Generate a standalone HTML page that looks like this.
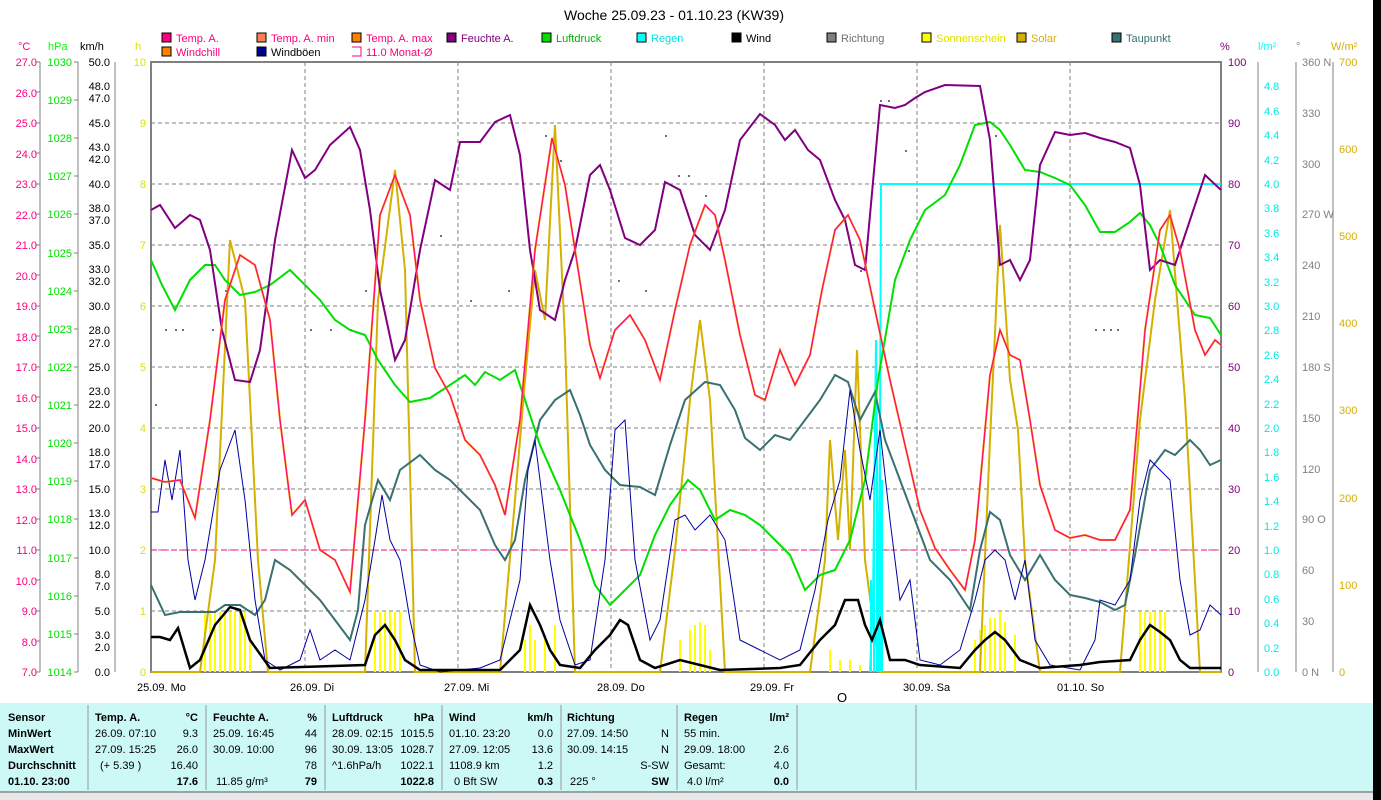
<!DOCTYPE html>
<html><head><meta charset="utf-8"><style>
html,body{margin:0;padding:0;background:#fff;width:1381px;height:800px;overflow:hidden;font-family:"Liberation Sans",sans-serif}
svg{position:absolute;left:0;top:0}
text{font-family:"Liberation Sans",sans-serif;font-size:11px}
</style></head><body>
<svg width="1381" height="800" viewBox="0 0 1381 800" xmlns="http://www.w3.org/2000/svg">
<rect x="1373" y="0" width="8" height="800" fill="#000"/>
<text x="674" y="20" text-anchor="middle" style="font-size:14px">Woche 25.09.23 - 01.10.23 (KW39)</text>
<g>
<rect x="162" y="33" width="9" height="9" fill="#ff0080" stroke="#000"/><text x="176" y="42" fill="#ff0080">Temp. A.</text>
<rect x="257" y="33" width="9" height="9" fill="#ff8050" stroke="#000"/><text x="271" y="42" fill="#ff0080">Temp. A. min</text>
<rect x="352" y="33" width="9" height="9" fill="#ff8000" stroke="#000"/><text x="366" y="42" fill="#ff0080">Temp. A. max</text>
<rect x="447" y="33" width="9" height="9" fill="#800080" stroke="#000"/><text x="461" y="42" fill="#800080">Feuchte A.</text>
<rect x="542" y="33" width="9" height="9" fill="#00e000" stroke="#000"/><text x="556" y="42" fill="#00b000">Luftdruck</text>
<rect x="637" y="33" width="9" height="9" fill="#00ffff" stroke="#000"/><text x="651" y="42" fill="#00e0e0">Regen</text>
<rect x="732" y="33" width="9" height="9" fill="#000" stroke="#000"/><text x="746" y="42">Wind</text>
<rect x="827" y="33" width="9" height="9" fill="#808080" stroke="#000"/><text x="841" y="42" fill="#707070">Richtung</text>
<rect x="922" y="33" width="9" height="9" fill="#ffff00" stroke="#000"/><text x="936" y="42" fill="#e0e000">Sonnenschein</text>
<rect x="1017" y="33" width="9" height="9" fill="#d4b000" stroke="#000"/><text x="1031" y="42" fill="#d4b000">Solar</text>
<rect x="1112" y="33" width="9" height="9" fill="#3a7070" stroke="#000"/><text x="1126" y="42" fill="#3a7070">Taupunkt</text>
<rect x="162" y="47" width="9" height="9" fill="#ff8000" stroke="#000"/><text x="176" y="56" fill="#ff0080">Windchill</text>
<rect x="257" y="47" width="9" height="9" fill="#000090" stroke="#000"/><text x="271" y="56">Windböen</text>
<path d="M352 47h9v9h-9" fill="none" stroke="#ff0080"/><text x="366" y="56" fill="#ff0080">11.0 Monat-Ø</text>
</g>
<text x="18" y="50" fill="#ff0080">°C</text><text x="48" y="50" fill="#00ff00">hPa</text><text x="80" y="50">km/h</text><text x="135" y="50" fill="#e0e000">h</text>
<text x="1220" y="50" fill="#800080">%</text><text x="1258" y="50" fill="#00ffff">l/m²</text><text x="1296" y="50" fill="#808080">°</text><text x="1331" y="50" fill="#d4b000">W/m²</text>
<g stroke="#808080" fill="none">
<path d="M40 62V672M78 62V672M115 62V672M1258 62V672M1296 62V672M1333 62V672"/>
</g>
<g fill="#ff0080" text-anchor="end">
<text x="37" y="66">27.0</text><text x="37" y="97">26.0</text><text x="37" y="127">25.0</text><text x="37" y="158">24.0</text><text x="37" y="188">23.0</text><text x="37" y="219">22.0</text><text x="37" y="249">21.0</text><text x="37" y="280">20.0</text><text x="37" y="310">19.0</text><text x="37" y="341">18.0</text><text x="37" y="371">17.0</text><text x="37" y="402">16.0</text><text x="37" y="432">15.0</text><text x="37" y="463">14.0</text><text x="37" y="493">13.0</text><text x="37" y="524">12.0</text><text x="37" y="554">11.0</text><text x="37" y="585">10.0</text><text x="37" y="615">9.0</text><text x="37" y="646">8.0</text><text x="37" y="676">7.0</text>
</g>
<g stroke="#808080"><path d="M35 62h5M35 92h5M35 123h5M35 153h5M35 184h5M35 214h5M35 245h5M35 275h5M35 306h5M35 336h5M35 367h5M35 397h5M35 428h5M35 458h5M35 489h5M35 519h5M35 550h5M35 580h5M35 611h5M35 641h5M35 672h5"/>
<path d="M74 62h4M74 100h4M74 138h4M74 176h4M74 214h4M74 253h4M74 291h4M74 329h4M74 367h4M74 405h4M74 443h4M74 481h4M74 519h4M74 558h4M74 596h4M74 634h4M74 672h4"/></g>
<g fill="#00e000" text-anchor="end">
<text x="72" y="66">1030</text><text x="72" y="104">1029</text><text x="72" y="142">1028</text><text x="72" y="180">1027</text><text x="72" y="218">1026</text><text x="72" y="257">1025</text><text x="72" y="295">1024</text><text x="72" y="333">1023</text><text x="72" y="371">1022</text><text x="72" y="409">1021</text><text x="72" y="447">1020</text><text x="72" y="485">1019</text><text x="72" y="523">1018</text><text x="72" y="562">1017</text><text x="72" y="600">1016</text><text x="72" y="638">1015</text><text x="72" y="676">1014</text>
</g>
<g text-anchor="end">
<text x="110" y="66">50.0</text><text x="110" y="90">48.0</text><text x="110" y="102">47.0</text><text x="110" y="127">45.0</text><text x="110" y="151">43.0</text><text x="110" y="163">42.0</text><text x="110" y="188">40.0</text><text x="110" y="212">38.0</text><text x="110" y="224">37.0</text><text x="110" y="249">35.0</text><text x="110" y="273">33.0</text><text x="110" y="285">32.0</text><text x="110" y="310">30.0</text><text x="110" y="334">28.0</text><text x="110" y="347">27.0</text><text x="110" y="371">25.0</text><text x="110" y="395">23.0</text><text x="110" y="408">22.0</text><text x="110" y="432">20.0</text><text x="110" y="456">18.0</text><text x="110" y="468">17.0</text><text x="110" y="493">15.0</text><text x="110" y="517">13.0</text><text x="110" y="529">12.0</text><text x="110" y="554">10.0</text><text x="110" y="578">8.0</text><text x="110" y="590">7.0</text><text x="110" y="615">5.0</text><text x="110" y="639">3.0</text><text x="110" y="651">2.0</text><text x="110" y="676">0.0</text>
</g>
<g fill="#e0e000" text-anchor="end">
<text x="146" y="66">10</text><text x="146" y="127">9</text><text x="146" y="188">8</text><text x="146" y="249">7</text><text x="146" y="310">6</text><text x="146" y="371">5</text><text x="146" y="432">4</text><text x="146" y="493">3</text><text x="146" y="554">2</text><text x="146" y="615">1</text><text x="146" y="676">0</text>
</g>
<g fill="#800080">
<text x="1228" y="66">100</text><text x="1228" y="127">90</text><text x="1228" y="188">80</text><text x="1228" y="249">70</text><text x="1228" y="310">60</text><text x="1228" y="371">50</text><text x="1228" y="432">40</text><text x="1228" y="493">30</text><text x="1228" y="554">20</text><text x="1228" y="615">10</text><text x="1228" y="676">0</text>
</g>
<g fill="#00e8e8">
<text x="1264" y="90">4.8</text><text x="1264" y="115">4.6</text><text x="1264" y="139">4.4</text><text x="1264" y="164">4.2</text><text x="1264" y="188">4.0</text><text x="1264" y="212">3.8</text><text x="1264" y="237">3.6</text><text x="1264" y="261">3.4</text><text x="1264" y="286">3.2</text><text x="1264" y="310">3.0</text><text x="1264" y="334">2.8</text><text x="1264" y="359">2.6</text><text x="1264" y="383">2.4</text><text x="1264" y="408">2.2</text><text x="1264" y="432">2.0</text><text x="1264" y="456">1.8</text><text x="1264" y="481">1.6</text><text x="1264" y="505">1.4</text><text x="1264" y="530">1.2</text><text x="1264" y="554">1.0</text><text x="1264" y="578">0.8</text><text x="1264" y="603">0.6</text><text x="1264" y="627">0.4</text><text x="1264" y="652">0.2</text><text x="1264" y="676">0.0</text>
</g>
<g fill="#808080">
<text x="1302" y="66">360 N</text><text x="1302" y="117">330</text><text x="1302" y="168">300</text><text x="1302" y="218">270 W</text><text x="1302" y="269">240</text><text x="1302" y="320">210</text><text x="1302" y="371">180 S</text><text x="1302" y="422">150</text><text x="1302" y="473">120</text><text x="1302" y="523">90 O</text><text x="1302" y="574">60</text><text x="1302" y="625">30</text><text x="1302" y="676">0 N</text>
</g>
<g fill="#d4b000">
<text x="1339" y="66">700</text><text x="1339" y="153">600</text><text x="1339" y="240">500</text><text x="1339" y="327">400</text><text x="1339" y="414">300</text><text x="1339" y="502">200</text><text x="1339" y="589">100</text><text x="1339" y="676">0</text>
</g>
<g stroke="#808080" stroke-dasharray="4,3" fill="none">
<path d="M151 123H1221M151 184H1221M151 245H1221M151 306H1221M151 367H1221M151 428H1221M151 489H1221M151 550H1221M151 611H1221"/>
<path d="M305 62V672M458 62V672M611 62V672M764 62V672M917 62V672M1070 62V672"/>
</g>
<path d="M151 62H1221V672H151Z" fill="none" stroke="#808080" stroke-width="2"/>
<path d="M151 550H1221" stroke="#ff0080" stroke-dasharray="6,4"/>
<!-- direction dots -->
<g fill="#707070">
<rect x="165" y="329" width="2" height="2"/><rect x="175" y="329" width="2" height="2"/><rect x="182" y="329" width="2" height="2"/><rect x="155" y="404" width="2" height="2"/><rect x="212" y="329" width="2" height="2"/><rect x="225" y="290" width="2" height="2"/><rect x="310" y="329" width="2" height="2"/><rect x="330" y="329" width="2" height="2"/><rect x="350" y="329" width="2" height="2"/><rect x="365" y="290" width="2" height="2"/><rect x="440" y="235" width="2" height="2"/><rect x="470" y="300" width="2" height="2"/><rect x="508" y="290" width="2" height="2"/><rect x="545" y="135" width="2" height="2"/><rect x="560" y="160" width="2" height="2"/><rect x="570" y="260" width="2" height="2"/><rect x="618" y="280" width="2" height="2"/><rect x="645" y="290" width="2" height="2"/><rect x="665" y="135" width="2" height="2"/><rect x="678" y="175" width="2" height="2"/><rect x="688" y="175" width="2" height="2"/><rect x="705" y="195" width="2" height="2"/><rect x="860" y="270" width="2" height="2"/><rect x="880" y="100" width="2" height="2"/><rect x="888" y="100" width="2" height="2"/><rect x="905" y="150" width="2" height="2"/><rect x="908" y="250" width="2" height="2"/><rect x="995" y="135" width="2" height="2"/><rect x="1095" y="329" width="2" height="2"/><rect x="1103" y="329" width="2" height="2"/><rect x="1110" y="329" width="2" height="2"/><rect x="1117" y="329" width="2" height="2"/><rect x="1205" y="175" width="2" height="2"/>
</g>
<g stroke="#ffff00" stroke-width="2">
<path d="M205 672V612M210 672V612M215 672V612M220 672V612M225 672V612M230 672V612M235 672V612M240 672V612M245 672V612M250 672V640"/>
<path d="M375 672V612M380 672V612M385 672V612M390 672V612M395 672V612M400 672V612"/>
<path d="M525 672V640M530 672V625M535 672V640M545 672V640M555 672V625"/>
<path d="M680 672V640M690 672V630M695 672V625M700 672V622M705 672V625M710 672V650"/>
<path d="M830 672V650M840 672V660M850 672V660M860 672V665"/>
<path d="M975 672V640M980 672V630M985 672V625M990 672V618M995 672V618M1000 672V612M1005 672V622M1015 672V635"/>
<path d="M1140 672V612M1145 672V612M1150 672V612M1155 672V612M1160 672V612M1165 672V612"/>
</g>
<polyline fill="none" stroke="#d4b000" stroke-width="2" points="151,672 200,672 215,560 230,240 245,300 258,560 268,672 365,672 378,300 395,170 405,270 415,672 500,672 515,500 525,380 535,270 545,320 555,125 565,340 575,672 660,672 675,550 690,400 700,320 710,400 725,672 810,672 825,560 830,440 838,540 845,450 850,550 857,350 865,560 880,672 980,672 990,440 1000,225 1010,380 1018,430 1025,560 1040,672 1120,672 1140,420 1155,300 1170,210 1185,400 1200,672 1221,672"/>
<g stroke="#00ffff" stroke-width="2" fill="none">
<polyline points="870,672 873,600 876,340 879,672 881,184 1221,184"/>
<path d="M871 672V580M874 672V500M877 672V440M880 672V420M882 672V480"/>
</g>
<polyline fill="none" stroke="#3a7070" stroke-width="2" points="151,585 165,615 180,612 215,612 225,605 240,605 255,615 265,600 275,560 290,570 305,585 320,600 335,620 350,640 358,610 365,525 378,480 390,500 400,470 420,455 435,470 450,480 465,495 480,510 495,545 505,560 515,540 525,480 540,420 555,400 570,390 580,415 590,445 605,470 620,485 640,487 655,495 670,445 685,400 705,382 720,385 735,410 745,438 760,450 775,435 790,440 805,420 820,400 835,375 848,382 860,420 875,392 885,440 900,480 915,520 930,560 950,580 970,610 980,550 990,512 1000,520 1010,555 1025,580 1040,555 1055,580 1070,595 1085,598 1100,602 1115,610 1125,605 1135,555 1150,470 1165,450 1175,455 1190,440 1200,450 1210,465 1221,460"/>
<polyline fill="none" stroke="#00e000" stroke-width="2" points="151,260 162,285 175,310 190,280 205,265 215,265 225,280 240,295 255,292 270,285 290,270 305,285 320,300 335,320 350,330 365,335 378,360 395,385 410,402 430,398 450,385 465,375 475,385 485,372 500,380 515,370 525,400 540,445 560,490 580,540 595,585 610,605 625,590 640,575 655,535 670,505 688,480 700,490 715,520 730,510 745,515 760,525 775,540 790,555 805,590 820,575 835,570 850,540 865,480 878,380 895,280 910,240 925,210 945,195 960,165 975,125 990,122 1000,130 1010,145 1025,170 1040,172 1055,178 1070,185 1085,205 1100,232 1115,232 1130,222 1140,213 1150,225 1160,245 1175,285 1195,315 1210,318 1221,335"/>
<polyline fill="none" stroke="#0000a0" stroke-width="1" points="151,512 158,512 165,460 172,500 180,450 188,560 195,600 205,560 220,470 235,430 245,500 255,600 265,660 280,670 300,660 310,630 320,660 335,650 350,660 365,600 375,540 382,495 390,540 400,560 410,620 420,665 440,672 480,668 500,660 520,580 528,470 535,440 540,480 550,560 560,620 575,665 590,660 605,560 615,430 625,420 635,560 650,640 660,620 675,520 685,515 695,530 710,515 725,540 740,640 760,650 780,660 800,650 815,590 828,520 840,480 850,390 860,450 870,500 880,430 890,520 900,600 910,580 920,660 940,665 960,650 975,600 985,560 995,550 1005,560 1015,600 1025,560 1035,640 1050,665 1080,670 1095,640 1100,600 1115,605 1130,580 1140,500 1150,460 1160,470 1170,480 1180,580 1190,635 1200,630 1210,605 1221,615"/>
<polyline fill="none" stroke="#000" stroke-width="2.5" points="151,637 160,637 170,640 178,628 190,668 200,660 215,625 230,607 240,610 250,640 270,668 365,665 375,635 385,625 395,640 405,660 420,670 500,670 520,650 530,605 540,625 550,650 560,665 580,668 595,650 610,635 620,620 628,625 640,660 655,668 680,660 700,665 720,670 780,668 800,665 820,640 835,625 845,600 858,600 865,625 872,640 880,620 890,660 905,660 920,665 960,668 975,650 985,640 995,632 1005,640 1020,660 1040,668 1080,665 1100,662 1130,660 1140,640 1150,625 1160,632 1170,640 1180,660 1190,668 1221,668"/>
<polyline fill="none" stroke="#800080" stroke-width="2" points="151,210 160,205 175,228 190,215 200,220 210,250 222,330 235,380 250,382 260,350 275,240 292,150 305,178 315,170 330,145 350,127 360,150 370,210 380,290 395,360 405,340 420,250 435,180 450,190 460,142 480,142 495,122 510,115 520,155 530,250 540,310 555,320 565,280 575,250 590,175 600,165 610,190 625,238 640,245 655,230 665,182 680,190 695,235 710,250 725,210 740,140 760,114 775,125 785,140 795,130 808,150 820,160 835,200 845,220 855,265 865,270 880,105 895,108 905,105 915,98 925,92 945,85 980,86 990,140 1000,265 1010,260 1020,280 1030,260 1040,165 1055,132 1070,135 1085,133 1100,138 1115,142 1130,148 1140,185 1150,270 1160,260 1175,265 1190,220 1205,175 1221,190"/>
<polyline fill="none" stroke="#ff8000" stroke-width="2" points="151,478 165,482 180,480 195,518 210,420 225,300 240,255 255,265 270,320 280,420 292,515 305,500 320,550 335,560 350,592 365,420 380,215 395,175 410,215 420,300 435,368 450,395 465,440 480,455 495,485 505,515 520,420 535,250 552,138 565,185 575,250 590,345 600,378 615,330 630,315 645,340 660,380 675,310 690,245 705,205 715,215 725,260 740,335 755,395 765,400 780,350 795,385 810,355 822,290 835,230 848,215 860,240 875,310 890,380 905,445 920,510 935,548 950,570 965,590 975,540 990,375 1000,330 1010,355 1020,360 1030,420 1040,485 1055,530 1070,538 1085,535 1100,540 1115,540 1130,510 1145,330 1160,230 1170,215 1180,250 1195,330 1205,355 1215,340 1221,345"/>
<polyline fill="none" stroke="#ff0080" stroke-width="1" points="151,478 165,482 180,480 195,518 210,420 225,300 240,255 255,265 270,320 280,420 292,515 305,500 320,550 335,560 350,592 365,420 380,215 395,175 410,215 420,300 435,368 450,395 465,440 480,455 495,485 505,515 520,420 535,250 552,138 565,185 575,250 590,345 600,378 615,330 630,315 645,340 660,380 675,310 690,245 705,205 715,215 725,260 740,335 755,395 765,400 780,350 795,385 810,355 822,290 835,230 848,215 860,240 875,310 890,380 905,445 920,510 935,548 950,570 965,590 975,540 990,375 1000,330 1010,355 1020,360 1030,420 1040,485 1055,530 1070,538 1085,535 1100,540 1115,540 1130,510 1145,330 1160,230 1170,215 1180,250 1195,330 1205,355 1215,340 1221,345"/>
<g style="font-size:11px">
<text x="137" y="691">25.09.  Mo</text><text x="290" y="691">26.09.  Di</text><text x="444" y="691">27.09.  Mi</text><text x="597" y="691">28.09.  Do</text><text x="750" y="691">29.09.  Fr</text><text x="903" y="691">30.09.  Sa</text><text x="1057" y="691">01.10.  So</text>
<text x="837" y="702" style="font-size:13px">O</text>
</g>
<rect x="0" y="703" width="1373" height="89" fill="#ccf8f6"/>
<path d="M0 792H1373" stroke="#a0a0a0" stroke-width="2"/>
<rect x="0" y="793" width="1373" height="7" fill="#e8e8e8"/>
<g stroke="#999"><path d="M88 705V790M206 705V790M325 705V790M442 705V790M561 705V790M677 705V790M797 705V790M916 705V790"/></g>
<g style="font-size:11px">
<g font-weight="bold"><text x="8" y="721">Sensor</text><text x="8" y="737">MinWert</text><text x="8" y="753">MaxWert</text><text x="8" y="769">Durchschnitt</text><text x="8" y="785">01.10. 23:00</text></g>
<text x="95" y="721" font-weight="bold">Temp. A.</text><text x="198" y="721" font-weight="bold" text-anchor="end">°C</text>
<text x="95" y="737">26.09.  07:10</text><text x="198" y="737" text-anchor="end">9.3</text>
<text x="95" y="753">27.09.  15:25</text><text x="198" y="753" text-anchor="end">26.0</text>
<text x="100" y="769">(+ 5.39 )</text><text x="198" y="769" text-anchor="end">16.40</text>
<text x="198" y="785" text-anchor="end" font-weight="bold">17.6</text>
<text x="213" y="721" font-weight="bold">Feuchte A.</text><text x="317" y="721" font-weight="bold" text-anchor="end">%</text>
<text x="213" y="737">25.09.  16:45</text><text x="317" y="737" text-anchor="end">44</text>
<text x="213" y="753">30.09.  10:00</text><text x="317" y="753" text-anchor="end">96</text>
<text x="317" y="769" text-anchor="end">78</text>
<text x="216" y="785">11.85 g/m³</text><text x="317" y="785" text-anchor="end" font-weight="bold">79</text>
<text x="332" y="721" font-weight="bold">Luftdruck</text><text x="434" y="721" font-weight="bold" text-anchor="end">hPa</text>
<text x="332" y="737">28.09.  02:15</text><text x="434" y="737" text-anchor="end">1015.5</text>
<text x="332" y="753">30.09.  13:05</text><text x="434" y="753" text-anchor="end">1028.7</text>
<text x="332" y="769">^1.6hPa/h</text><text x="434" y="769" text-anchor="end">1022.1</text>
<text x="434" y="785" text-anchor="end" font-weight="bold">1022.8</text>
<text x="449" y="721" font-weight="bold">Wind</text><text x="553" y="721" font-weight="bold" text-anchor="end">km/h</text>
<text x="449" y="737">01.10.  23:20</text><text x="553" y="737" text-anchor="end">0.0</text>
<text x="449" y="753">27.09.  12:05</text><text x="553" y="753" text-anchor="end">13.6</text>
<text x="449" y="769">1108.9 km</text><text x="553" y="769" text-anchor="end">1.2</text>
<text x="454" y="785">0 Bft SW</text><text x="553" y="785" text-anchor="end" font-weight="bold">0.3</text>
<text x="567" y="721" font-weight="bold">Richtung</text>
<text x="567" y="737">27.09.  14:50</text><text x="669" y="737" text-anchor="end">N</text>
<text x="567" y="753">30.09.  14:15</text><text x="669" y="753" text-anchor="end">N</text>
<text x="669" y="769" text-anchor="end">S-SW</text>
<text x="570" y="785">225 °</text><text x="669" y="785" text-anchor="end" font-weight="bold">SW</text>
<text x="684" y="721" font-weight="bold">Regen</text><text x="789" y="721" font-weight="bold" text-anchor="end">l/m²</text>
<text x="684" y="737">55 min.</text>
<text x="684" y="753">29.09.  18:00</text><text x="789" y="753" text-anchor="end">2.6</text>
<text x="684" y="769">Gesamt:</text><text x="789" y="769" text-anchor="end">4.0</text>
<text x="687" y="785">4.0 l/m²</text><text x="789" y="785" text-anchor="end" font-weight="bold">0.0</text>
</g>
</svg>
</body></html>
